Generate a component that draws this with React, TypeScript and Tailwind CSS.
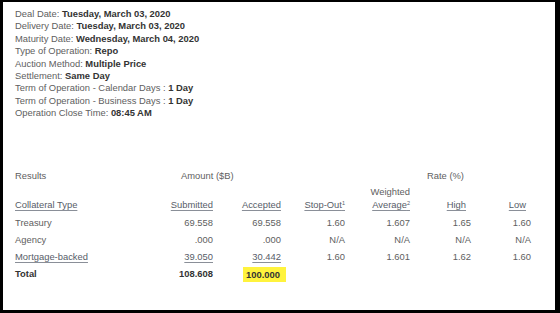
import React from "react";

const details: [string, string][] = [
  ["Deal Date:", "Tuesday, March 03, 2020"],
  ["Delivery Date:", "Tuesday, March 03, 2020"],
  ["Maturity Date:", "Wednesday, March 04, 2020"],
  ["Type of Operation:", "Repo"],
  ["Auction Method:", "Multiple Price"],
  ["Settlement:", "Same Day"],
  ["Term of Operation - Calendar Days :", "1 Day"],
  ["Term of Operation - Business Days :", "1 Day"],
  ["Operation Close Time:", "08:45 AM"],
];

type Row = {
  type: string;
  submitted: string;
  accepted: string;
  stopOut: string;
  weighted: string;
  high: string;
  low: string;
  link?: boolean;
};

const rows: Row[] = [
  { type: "Treasury", submitted: "69.558", accepted: "69.558", stopOut: "1.60", weighted: "1.607", high: "1.65", low: "1.60" },
  { type: "Agency", submitted: ".000", accepted: ".000", stopOut: "N/A", weighted: "N/A", high: "N/A", low: "N/A" },
  { type: "Mortgage-backed", submitted: "39.050", accepted: "30.442", stopOut: "1.60", weighted: "1.601", high: "1.62", low: "1.60", link: true },
];

const grid = "grid grid-cols-[135px_63px_68px_64px_65px_61px_60px]";
const link = "underline underline-offset-[2px] decoration-[#8a8f98] text-[#575d68]";

export default function App() {
  return (
    <div
      className="w-[560px] h-[313px] bg-white border-black border-l-[3px] border-t-[2px] border-r-[5px] border-b-[3px] pl-[12px] pt-[6px] text-[9.4px] text-[#606060] overflow-hidden"
      style={{ fontFamily: '"Liberation Sans", Arial, sans-serif' }}
    >
      <div className="leading-[12.4px]">
        {details.map(([label, value]) => (
          <div key={label} className="whitespace-nowrap">
            {label} <span className="font-bold text-[#333]">{value}</span>
          </div>
        ))}
      </div>

      <div className={`${grid} mt-[50px] leading-[12.7px]`}>
        <div>Results</div>
        <div className="col-span-2 pl-[31px]">Amount ($B)</div>
        <div className="col-span-2" />
        <div className="col-span-2 pl-[17px]">Rate (%)</div>
      </div>

      <div className={`${grid} mt-[4px] leading-[12.7px] items-end pb-[2px]`}>
        <div className={`${link} justify-self-start`}>Collateral Type</div>
        <div className="text-right">
          <span className={link}>Submitted</span>
        </div>
        <div className="text-right">
          <span className={link}>Accepted</span>
        </div>
        <div className="text-right">
          <span className={link}>
            Stop-Out<sup className="text-[5.5px] leading-none">1</sup>
          </span>
        </div>
        <div className="text-right">
          <div>Weighted</div>
          <span className={link}>
            Average<sup className="text-[5.5px] leading-none">2</sup>
          </span>
        </div>
        <div className="text-right pr-[5px]">
          <span className={link}>High</span>
        </div>
        <div className="text-right pr-[5px]">
          <span className={link}>Low</span>
        </div>
      </div>

      {rows.map((r) => (
        <div key={r.type} className={`${grid} h-[17px] leading-[17px]`}>
          <div>{r.link ? <span className={link}>{r.type}</span> : r.type}</div>
          <div className="text-right">
            {r.link ? <span className={link}>{r.submitted}</span> : r.submitted}
          </div>
          <div className="text-right">
            {r.link ? <span className={link}>{r.accepted}</span> : r.accepted}
          </div>
          <div className="text-right">{r.stopOut}</div>
          <div className="text-right">{r.weighted}</div>
          <div className="text-right">{r.high}</div>
          <div className="text-right">{r.low}</div>
        </div>
      ))}

      <div className={`${grid} h-[17px] leading-[17px] font-bold text-[#333]`}>
        <div>Total</div>
        <div className="text-right">108.608</div>
        <div className="text-right">
          <span className="inline-block bg-[#fff33d] h-[15px] leading-[15px] pl-[3px] pr-[6px] -mr-[5px] align-middle">
            100.000
          </span>
        </div>
      </div>
    </div>
  );
}
